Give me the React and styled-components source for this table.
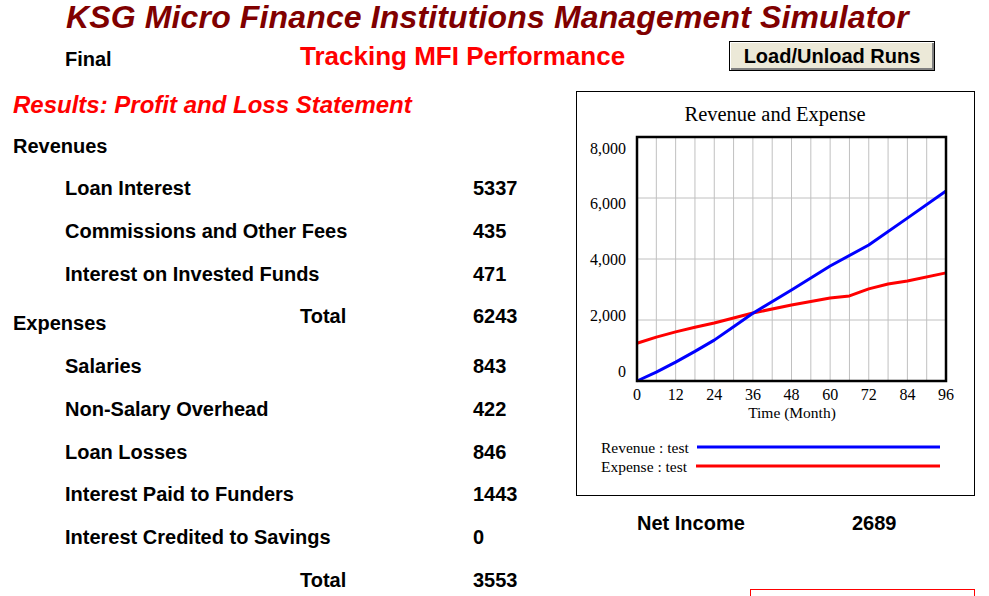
import React from "react";
import styled, { createGlobalStyle } from "styled-components";

const GlobalStyle = createGlobalStyle`
  html, body {
    margin: 0;
    padding: 0;
    background: #fff;
    overflow: hidden;
  }
  body {
    font-family: "Liberation Sans", Arial, sans-serif;
    color: #000;
  }
`;

// figures as reported by the model (rounded, so totals are not plain sums)
const statement = {
  revenues: [
    { label: "Loan Interest", value: 5337 },
    { label: "Commissions and Other Fees", value: 435 },
    { label: "Interest on Invested Funds", value: 471 },
  ],
  revenueTotal: 6243,
  expenses: [
    { label: "Salaries", value: 843 },
    { label: "Non-Salary Overhead", value: 422 },
    { label: "Loan Losses", value: 846 },
    { label: "Interest Paid to Funders", value: 1443 },
    { label: "Interest Credited to Savings", value: 0 },
  ],
  expenseTotal: 3553,
  netIncome: 2689,
};

// cumulative series read off the run (month, value)
const revenueSeries = [
  [0, 0], [6, 290], [12, 620], [18, 970], [24, 1340], [30, 1780], [36, 2220],
  [48, 2984], [60, 3770], [72, 4460], [84, 5340], [96, 6230],
];
const expenseSeries = [
  [0, 1236], [6, 1440], [12, 1610], [18, 1760], [24, 1900], [36, 2230],
  [48, 2490], [60, 2720], [66, 2790], [72, 3020], [78, 3180], [84, 3280], [96, 3545],
];

function RevenueChart() {
  const px = 60;
  const py = 45;
  const pw = 309;
  const ph = 244;
  const sx = (t) => px + (t * pw) / 96;
  const sy = (v) => py + ph - (v * ph) / 8000;
  const toPoints = (s) => s.map(([t, v]) => `${sx(t)},${sy(v)}`).join(" ");
  const yLabels = [
    ["8,000", 61.5],
    ["6,000", 117],
    ["4,000", 173],
    ["2,000", 229],
    ["0", 284.5],
  ];
  const serif = '"Liberation Serif", "Times New Roman", serif';

  return (
    <svg width="397" height="403" viewBox="0 0 397 403" fontFamily={serif}>
      <text x="198" y="29" fontSize="20.5" textAnchor="middle">
        Revenue and Expense
      </text>
      {Array.from({ length: 15 }, (_, i) => {
        const x = px + ((i + 1) * pw) / 16;
        return <line key={"v" + i} x1={x} x2={x} y1={py} y2={py + ph} stroke="#c0c0c0" strokeWidth="1" />;
      })}
      {[1, 2, 3].map((j) => (
        <line key={"h" + j} x1={px} x2={px + pw} y1={py + j * 61} y2={py + j * 61} stroke="#c0c0c0" strokeWidth="1" />
      ))}
      <polyline points={toPoints(expenseSeries)} fill="none" stroke="#ff0000" strokeWidth="3" strokeLinejoin="round" />
      <polyline points={toPoints(revenueSeries)} fill="none" stroke="#0000ff" strokeWidth="3" strokeLinejoin="round" />
      <rect x={px} y={py} width={pw} height={ph} fill="none" stroke="#000" strokeWidth="2.5" />
      {yLabels.map(([t, y]) => (
        <text key={t} x="49" y={y} fontSize="16" textAnchor="end">
          {t}
        </text>
      ))}
      {[0, 12, 24, 36, 48, 60, 72, 84, 96].map((m) => (
        <text key={m} x={sx(m)} y="308" fontSize="16" textAnchor="middle">
          {m}
        </text>
      ))}
      <text x="215" y="326" fontSize="15.5" textAnchor="middle">
        Time (Month)
      </text>
      <text x="24" y="361" fontSize="15.5">
        Revenue : test
      </text>
      <line x1="120" x2="363" y1="355" y2="355" stroke="#0000ff" strokeWidth="3" />
      <text x="24" y="380" fontSize="15.5">
        Expense : test
      </text>
      <line x1="119" x2="363" y1="374" y2="374" stroke="#ff0000" strokeWidth="3" />
    </svg>
  );
}

function App() {
  const { revenues, expenses, revenueTotal, expenseTotal, netIncome } = statement;

  return (
    <Page>
      <GlobalStyle />
      <Title>KSG Micro Finance Institutions Management Simulator</Title>
      <SubRow>
        <RunName>Final</RunName>
        <Tracking>Tracking MFI Performance</Tracking>
        <LoadButton>Load/Unload Runs</LoadButton>
      </SubRow>
      <Main>
        <LeftCol>
          <SectionTitle>Results: Profit and Loss Statement</SectionTitle>
          <Row>
            <Heading>Revenues</Heading>
          </Row>
          {revenues.map((r) => (
            <Row key={r.label}>
              <ItemLabel>{r.label}</ItemLabel>
              <Amount>{r.value}</Amount>
            </Row>
          ))}
          <Row $tall>
            <Heading $drop>Expenses</Heading>
            <TotalLabel>Total</TotalLabel>
            <Amount>{revenueTotal}</Amount>
          </Row>
          {expenses.map((r) => (
            <Row key={r.label}>
              <ItemLabel>{r.label}</ItemLabel>
              <Amount>{r.value}</Amount>
            </Row>
          ))}
          <Row>
            <TotalLabel>Total</TotalLabel>
            <Amount>{expenseTotal}</Amount>
          </Row>
        </LeftCol>
        <RightCol>
          <ChartBox>
            <RevenueChart />
          </ChartBox>
          <NetRow>
            <span>Net Income</span>
            <span>{netIncome}</span>
          </NetRow>
          <NoteBox />
        </RightCol>
      </Main>
    </Page>
  );
}

const Page = styled.div`
  width: 989px;
  height: 596px;
  overflow: hidden;
`;

const Title = styled.div`
  padding-left: 66px;
  font-size: 32px;
  line-height: 34px;
  letter-spacing: 0.14px;
  font-weight: bold;
  font-style: italic;
  color: #800000;
  white-space: nowrap;
`;

const SubRow = styled.div`
  display: grid;
  grid-template-columns: 235px 429px 206px;
  align-items: start;
  height: 57px;
  padding-left: 65px;
`;

const RunName = styled.div`
  margin-top: 12.5px;
  font-size: 20px;
  line-height: 24px;
  font-weight: bold;
`;

const Tracking = styled.div`
  margin-top: 6.5px;
  font-size: 26px;
  line-height: 30px;
  font-weight: bold;
  color: #ff0000;
  white-space: nowrap;
`;

const LoadButton = styled.button`
  margin-top: 7px;
  width: 206px;
  height: 30px;
  padding: 0;
  font-family: "Liberation Sans", Arial, sans-serif;
  font-size: 20px;
  font-weight: bold;
  color: #000;
  background: #ece9d8;
  border: 1px solid #000;
  box-shadow: inset 1px 1px 0 #fff, inset -2px -2px 0 #808080;
  cursor: pointer;
`;

const Main = styled.div`
  display: flex;
  align-items: flex-start;
`;

const LeftCol = styled.div`
  width: 563px;
  padding-left: 13px;
`;

const SectionTitle = styled.div`
  font-size: 24px;
  line-height: 28px;
  font-weight: bold;
  font-style: italic;
  color: #ff0000;
  margin-bottom: 5.5px;
`;

const Row = styled.div`
  display: grid;
  grid-template-columns: 52px 235px 173px 1fr;
  align-items: start;
  height: ${(p) => (p.$tall ? "50px" : "42.7px")};
  font-size: 20px;
  line-height: 42.7px;
  font-weight: bold;
  white-space: nowrap;
`;

const Heading = styled.div`
  grid-column: 1 / span 2;
  padding-top: ${(p) => (p.$drop ? "7px" : "0")};
`;

const ItemLabel = styled.div`
  grid-column: 2;
`;

const TotalLabel = styled.div`
  grid-column: 3;
  grid-row: 1;
`;

const Amount = styled.div`
  grid-column: 4;
  grid-row: 1;
`;

const RightCol = styled.div`
  width: 399px;
`;

const ChartBox = styled.div`
  width: 397px;
  height: 403px;
  border: 1px solid #000;
  background: #fff;

  svg {
    display: block;
  }
`;

const NetRow = styled.div`
  display: grid;
  grid-template-columns: 215px auto;
  margin-top: 15px;
  padding-left: 61px;
  font-size: 20px;
  line-height: 24px;
  font-weight: bold;
`;

const NoteBox = styled.div`
  margin-top: 54px;
  margin-left: 174px;
  width: 223px;
  height: 60px;
  border: 1px solid #ff0000;
`;

export default App;
